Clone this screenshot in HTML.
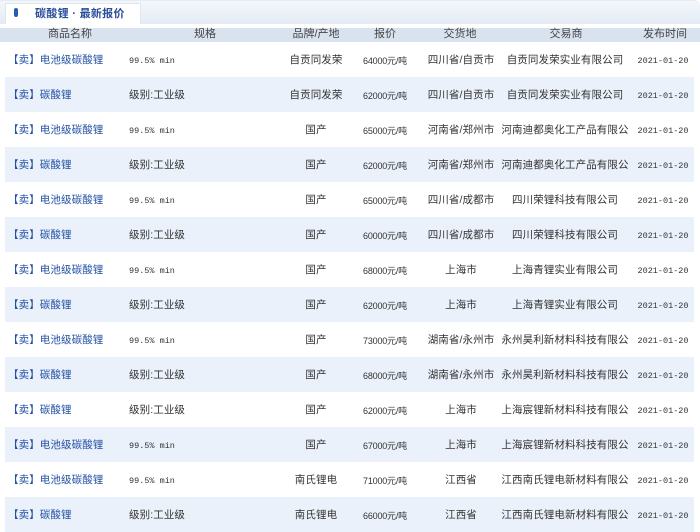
<!DOCTYPE html>
<html><head><meta charset="utf-8">
<style>
*{margin:0;padding:0;box-sizing:border-box}
body{width:700px;height:530px;background:#fff;position:relative;overflow:hidden;font-family:"Liberation Sans","Noto Sans CJK SC",sans-serif;font-size:10.5px;color:#333}
.bar{position:absolute;left:0;top:0;width:700px;height:24px;background:linear-gradient(#f4f7fb,#e3ebf5);border-radius:0 6px 0 0;border-top:1px solid #e6ecf3}
.tab{position:absolute;left:5px;top:3px;width:136px;height:21px;background:#fff;border:1px solid #e0e6ee;border-bottom:none}
.pill{position:absolute;left:14px;top:8px;width:4px;height:9px;border-radius:2px;background:#2a5ab8}
.tabt{position:absolute;left:35px;top:5px;font-size:11px;font-weight:bold;color:#2b4e9a;letter-spacing:0.3px}
.hdr{position:absolute;left:0;top:28px;width:700px;height:14px;background:#d9e3ef}
.h{position:absolute;top:27px;font-size:11px;color:#444;transform:translateX(-50%);white-space:nowrap;line-height:15px}
.row{position:absolute;left:5px;width:689px;height:35px}
.row.s{background:#eaf1fb}
.c{position:absolute;white-space:nowrap;line-height:16px;letter-spacing:0.1px;margin-top:0}
.m{font-family:"Liberation Mono","DejaVu Sans Mono",monospace;font-size:8.5px;letter-spacing:0;margin-top:1px}
.cc{transform:translateX(-50%)}
.n{color:#2452a4;font-size:10.5px}
.sm{font-size:9px;letter-spacing:-0.2px;margin-top:1px}
.d{font-family:"Liberation Mono","DejaVu Sans Mono",monospace;font-size:8.5px;letter-spacing:0;margin-top:1px}
</style></head><body>
<div class="bar"></div>
<div class="tab"></div>
<div class="pill"></div>
<div class="tabt">碳酸锂 · 最新报价</div>
<div class="hdr"></div>
<div class="h" style="left:70px">商品名称</div>
<div class="h" style="left:205px">规格</div>
<div class="h" style="left:316px">品牌/产地</div>
<div class="h" style="left:385px">报价</div>
<div class="h" style="left:460px">交货地</div>
<div class="h" style="left:566px">交易商</div>
<div class="h" style="left:665px">发布时间</div>
<div class="row" style="top:42px"></div>
<div class="row s" style="top:77px"></div>
<div class="row" style="top:112px"></div>
<div class="row s" style="top:147px"></div>
<div class="row" style="top:182px"></div>
<div class="row s" style="top:217px"></div>
<div class="row" style="top:252px"></div>
<div class="row s" style="top:287px"></div>
<div class="row" style="top:322px"></div>
<div class="row s" style="top:357px"></div>
<div class="row" style="top:392px"></div>
<div class="row s" style="top:427px"></div>
<div class="row" style="top:462px"></div>
<div class="row s" style="top:497px"></div>

<div class="c n" style="left:8px;top:52px">【卖】电池级碳酸锂</div><div class="c m" style="left:129px;top:52px">99.5% min</div><div class="c cc" style="left:316px;top:52px">自贡同发荣</div><div class="c cc sm" style="left:385px;top:52px">64000元/吨</div><div class="c cc" style="left:461px;top:52px">四川省/自贡市</div><div class="c cc" style="left:565px;top:52px">自贡同发荣实业有限公司</div><div class="c cc d" style="left:663px;top:52px">2021-01-20</div>
<div class="c n" style="left:8px;top:87px">【卖】碳酸锂</div><div class="c" style="left:129px;top:87px">级别:工业级</div><div class="c cc" style="left:316px;top:87px">自贡同发荣</div><div class="c cc sm" style="left:385px;top:87px">62000元/吨</div><div class="c cc" style="left:461px;top:87px">四川省/自贡市</div><div class="c cc" style="left:565px;top:87px">自贡同发荣实业有限公司</div><div class="c cc d" style="left:663px;top:87px">2021-01-20</div>
<div class="c n" style="left:8px;top:122px">【卖】电池级碳酸锂</div><div class="c m" style="left:129px;top:122px">99.5% min</div><div class="c cc" style="left:316px;top:122px">国产</div><div class="c cc sm" style="left:385px;top:122px">65000元/吨</div><div class="c cc" style="left:461px;top:122px">河南省/郑州市</div><div class="c cc" style="left:565px;top:122px">河南迪都奥化工产品有限公</div><div class="c cc d" style="left:663px;top:122px">2021-01-20</div>
<div class="c n" style="left:8px;top:157px">【卖】碳酸锂</div><div class="c" style="left:129px;top:157px">级别:工业级</div><div class="c cc" style="left:316px;top:157px">国产</div><div class="c cc sm" style="left:385px;top:157px">62000元/吨</div><div class="c cc" style="left:461px;top:157px">河南省/郑州市</div><div class="c cc" style="left:565px;top:157px">河南迪都奥化工产品有限公</div><div class="c cc d" style="left:663px;top:157px">2021-01-20</div>
<div class="c n" style="left:8px;top:192px">【卖】电池级碳酸锂</div><div class="c m" style="left:129px;top:192px">99.5% min</div><div class="c cc" style="left:316px;top:192px">国产</div><div class="c cc sm" style="left:385px;top:192px">65000元/吨</div><div class="c cc" style="left:461px;top:192px">四川省/成都市</div><div class="c cc" style="left:565px;top:192px">四川荣锂科技有限公司</div><div class="c cc d" style="left:663px;top:192px">2021-01-20</div>
<div class="c n" style="left:8px;top:227px">【卖】碳酸锂</div><div class="c" style="left:129px;top:227px">级别:工业级</div><div class="c cc" style="left:316px;top:227px">国产</div><div class="c cc sm" style="left:385px;top:227px">60000元/吨</div><div class="c cc" style="left:461px;top:227px">四川省/成都市</div><div class="c cc" style="left:565px;top:227px">四川荣锂科技有限公司</div><div class="c cc d" style="left:663px;top:227px">2021-01-20</div>
<div class="c n" style="left:8px;top:262px">【卖】电池级碳酸锂</div><div class="c m" style="left:129px;top:262px">99.5% min</div><div class="c cc" style="left:316px;top:262px">国产</div><div class="c cc sm" style="left:385px;top:262px">68000元/吨</div><div class="c cc" style="left:461px;top:262px">上海市</div><div class="c cc" style="left:565px;top:262px">上海青锂实业有限公司</div><div class="c cc d" style="left:663px;top:262px">2021-01-20</div>
<div class="c n" style="left:8px;top:297px">【卖】碳酸锂</div><div class="c" style="left:129px;top:297px">级别:工业级</div><div class="c cc" style="left:316px;top:297px">国产</div><div class="c cc sm" style="left:385px;top:297px">62000元/吨</div><div class="c cc" style="left:461px;top:297px">上海市</div><div class="c cc" style="left:565px;top:297px">上海青锂实业有限公司</div><div class="c cc d" style="left:663px;top:297px">2021-01-20</div>
<div class="c n" style="left:8px;top:332px">【卖】电池级碳酸锂</div><div class="c m" style="left:129px;top:332px">99.5% min</div><div class="c cc" style="left:316px;top:332px">国产</div><div class="c cc sm" style="left:385px;top:332px">73000元/吨</div><div class="c cc" style="left:461px;top:332px">湖南省/永州市</div><div class="c cc" style="left:565px;top:332px">永州昊利新材料科技有限公</div><div class="c cc d" style="left:663px;top:332px">2021-01-20</div>
<div class="c n" style="left:8px;top:367px">【卖】碳酸锂</div><div class="c" style="left:129px;top:367px">级别:工业级</div><div class="c cc" style="left:316px;top:367px">国产</div><div class="c cc sm" style="left:385px;top:367px">68000元/吨</div><div class="c cc" style="left:461px;top:367px">湖南省/永州市</div><div class="c cc" style="left:565px;top:367px">永州昊利新材料科技有限公</div><div class="c cc d" style="left:663px;top:367px">2021-01-20</div>
<div class="c n" style="left:8px;top:402px">【卖】碳酸锂</div><div class="c" style="left:129px;top:402px">级别:工业级</div><div class="c cc" style="left:316px;top:402px">国产</div><div class="c cc sm" style="left:385px;top:402px">62000元/吨</div><div class="c cc" style="left:461px;top:402px">上海市</div><div class="c cc" style="left:565px;top:402px">上海宸锂新材料科技有限公</div><div class="c cc d" style="left:663px;top:402px">2021-01-20</div>
<div class="c n" style="left:8px;top:437px">【卖】电池级碳酸锂</div><div class="c m" style="left:129px;top:437px">99.5% min</div><div class="c cc" style="left:316px;top:437px">国产</div><div class="c cc sm" style="left:385px;top:437px">67000元/吨</div><div class="c cc" style="left:461px;top:437px">上海市</div><div class="c cc" style="left:565px;top:437px">上海宸锂新材料科技有限公</div><div class="c cc d" style="left:663px;top:437px">2021-01-20</div>
<div class="c n" style="left:8px;top:472px">【卖】电池级碳酸锂</div><div class="c m" style="left:129px;top:472px">99.5% min</div><div class="c cc" style="left:316px;top:472px">南氏锂电</div><div class="c cc sm" style="left:385px;top:472px">71000元/吨</div><div class="c cc" style="left:461px;top:472px">江西省</div><div class="c cc" style="left:565px;top:472px">江西南氏锂电新材料有限公</div><div class="c cc d" style="left:663px;top:472px">2021-01-20</div>
<div class="c n" style="left:8px;top:507px">【卖】碳酸锂</div><div class="c" style="left:129px;top:507px">级别:工业级</div><div class="c cc" style="left:316px;top:507px">南氏锂电</div><div class="c cc sm" style="left:385px;top:507px">66000元/吨</div><div class="c cc" style="left:461px;top:507px">江西省</div><div class="c cc" style="left:565px;top:507px">江西南氏锂电新材料有限公</div><div class="c cc d" style="left:663px;top:507px">2021-01-20</div>
</body></html>
